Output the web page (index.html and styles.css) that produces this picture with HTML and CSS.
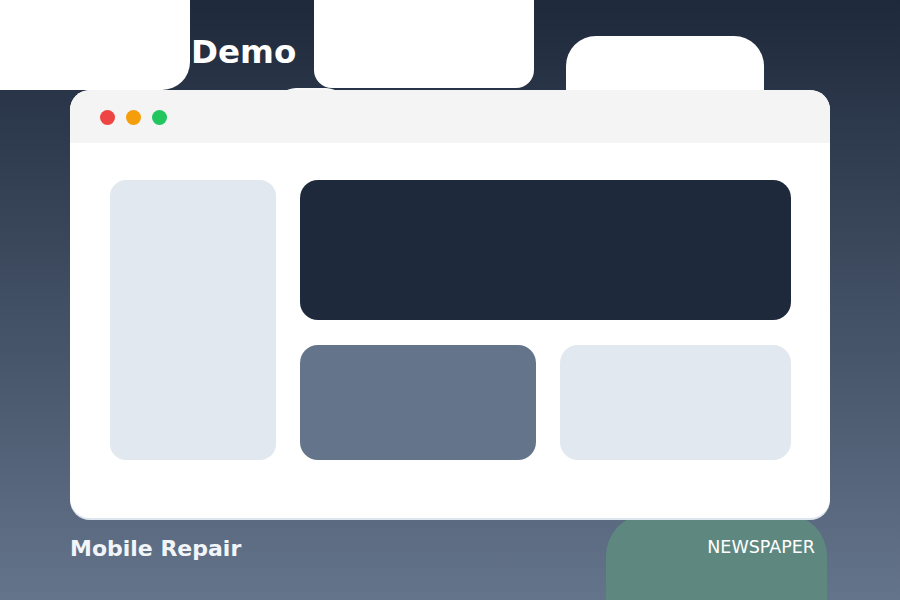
FILE: index.html
```html
<!DOCTYPE html>
<html lang="en">
<head>
<meta charset="utf-8">
<title>Demo</title>
<link rel="stylesheet" href="styles.css">
</head>
<body>
<div class="page">
  <header class="top">
    <h1 class="title">Demo</h1>
  </header>
  <div class="blob blob-a"></div>
  <div class="blob blob-b"></div>
  <div class="blob blob-c"></div>
  <div class="blob blob-d"></div>
  <div class="blob blob-green"></div>

  <main class="window">
    <div class="window-bar">
      <span class="dot dot-red"></span>
      <span class="dot dot-amber"></span>
      <span class="dot dot-green"></span>
    </div>
    <div class="window-body">
      <div class="tile tile-side"></div>
      <div class="tile tile-hero"></div>
      <div class="tile tile-mid"></div>
      <div class="tile tile-light"></div>
    </div>
  </main>

  <footer class="foot">
    <span class="brand">Mobile Repair</span>
    <span class="tag">NEWSPAPER</span>
  </footer>
</div>
</body>
</html>
```

FILE: styles.css
```css
html, body {
  margin: 0;
  padding: 0;
}
body {
  width: 900px;
  height: 600px;
  overflow: hidden;
  font-family: "DejaVu Sans", "Liberation Sans", sans-serif;
}
.page {
  position: relative;
  width: 900px;
  height: 600px;
  overflow: hidden;
  background: linear-gradient(180deg, #1e293b 0%, #64748b 100%);
  display: flex;
  flex-direction: column;
}
.top {
  height: 90px;
  flex: none;
  box-sizing: border-box;
  padding-left: 191px;
  padding-top: 33px;
}
.title {
  margin: 0;
  font-size: 32.5px;
  font-weight: bold;
  line-height: normal;
  color: #ffffff;
}
.blob {
  position: absolute;
  background: #ffffff;
}
.blob-a {
  left: 0;
  top: 0;
  width: 190px;
  height: 90px;
  border-bottom-right-radius: 28px;
}
.blob-b {
  left: 314px;
  top: -20px;
  width: 220px;
  height: 108px;
  border-radius: 18px;
}
.blob-c {
  left: 566px;
  top: 36px;
  width: 198px;
  height: 120px;
  border-radius: 30px;
}
.blob-d {
  left: 276px;
  top: 88px;
  width: 70px;
  height: 40px;
  border-radius: 20px;
  background: #f8f8f8;
}
.blob-green {
  left: 606px;
  top: 514px;
  width: 221px;
  height: 86px;
  border-radius: 42px 42px 0 0;
  background: #5e887f;
}
.window {
  position: relative;
  z-index: 1;
  flex: none;
  margin: 0 70px;
  height: 428px;
  background: #ffffff;
  border-radius: 20px;
  box-shadow: 0 2px 0 #dfe5ee;
  display: flex;
  flex-direction: column;
  overflow: hidden;
}
.window-bar {
  height: 53px;
  flex: none;
  background: #f4f4f4;
  display: flex;
  align-items: center;
  gap: 11px;
  padding-left: 30px;
  padding-top: 1px;
  box-sizing: border-box;
}
.dot {
  width: 15px;
  height: 15px;
  border-radius: 50%;
}
.dot-red { background: #ef4444; }
.dot-amber { background: #f59e0b; }
.dot-green { background: #22c55e; }
.window-body {
  padding: 37px 39px 0 40px;
  display: grid;
  grid-template-columns: 166px 236px 1fr;
  grid-template-rows: 140px 115px;
  column-gap: 24px;
  row-gap: 25px;
}
.tile {
  border-radius: 18px;
}
.tile-side {
  grid-row: 1 / 3;
  background: #e2e8f0;
  border-radius: 16px;
}
.tile-hero {
  grid-column: 2 / 4;
  background: #1e293b;
}
.tile-mid {
  background: #64748b;
}
.tile-light {
  background: #e2e8f0;
}
.foot {
  position: relative;
  z-index: 2;
  flex: none;
  display: flex;
  justify-content: space-between;
  align-items: baseline;
  padding: 0 85px 0 70px;
  margin-top: 18px;
  color: #ffffff;
}
.brand {
  font-size: 22px;
  font-weight: bold;
  color: #f1f5f9;
}
.tag {
  font-size: 17.5px;
  position: relative;
  top: -3px;
}
```
